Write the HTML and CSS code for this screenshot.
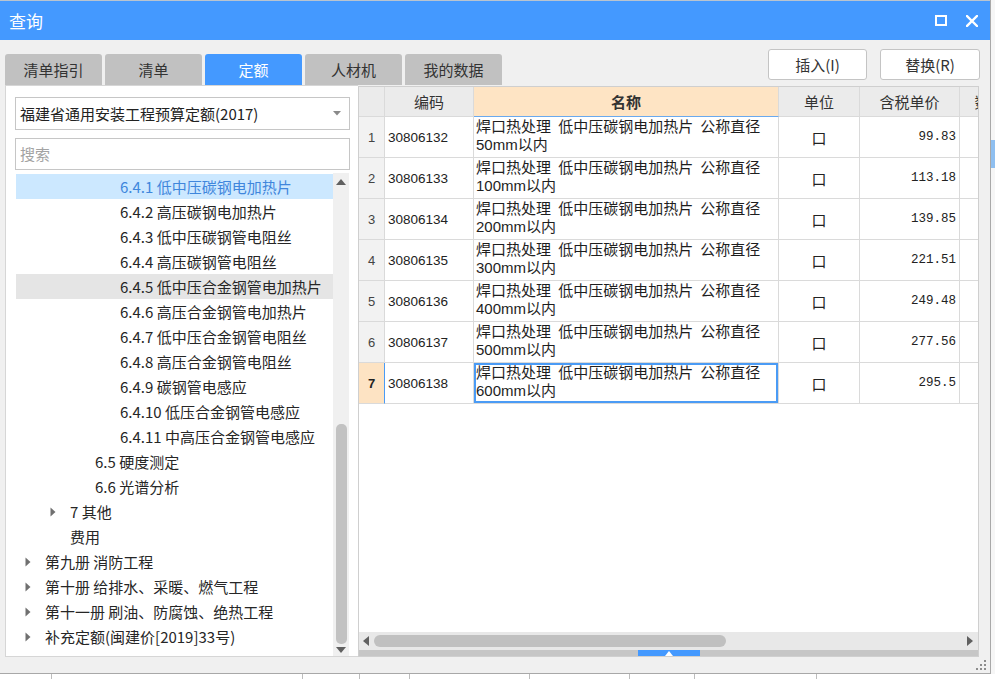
FILE: index.html
```html
<!DOCTYPE html>
<html lang="zh-CN">
<head>
<meta charset="utf-8">
<title>查询</title>
<link rel="stylesheet" href="styles.css">
</head>
<body>
<div class="screen">
  <div class="dialog">
    <div class="titlebar">
      <span class="title">查询</span>
      <div class="win-btns">
        <svg class="win-max" width="12" height="11" viewBox="0 0 12 11"><rect x="1" y="1" width="10" height="9" fill="none" stroke="#fff" stroke-width="2"/></svg>
        <svg class="win-close" width="12" height="12" viewBox="0 0 12 12"><path d="M1 1 L11 11 M11 1 L1 11" stroke="#fff" stroke-width="2.4" stroke-linecap="square"/></svg>
      </div>
    </div>
    <div class="body">
      <div class="toolbar">
        <div class="tabs">
          <div class="tab">清单指引</div>
          <div class="tab">清单</div>
          <div class="tab active">定额</div>
          <div class="tab">人材机</div>
          <div class="tab">我的数据</div>
        </div>
        <div class="actions">
          <button class="btn">插入(I)</button>
          <button class="btn btn-r">替换(R)</button>
        </div>
      </div>
      <div class="panes">
        <div class="left">
          <div class="select">
            <span class="select-text">福建省通用安装工程预算定额(2017)</span>
            <svg width="8" height="5" viewBox="0 0 8 5"><path d="M0 0 L8 0 L4 4.5 Z" fill="#8a8a8a"/></svg>
          </div>
          <div class="search">搜索</div>
          <div class="tree">
            <div class="tree-list">
              <div class="node l3 selected"><span class="tg"></span>6.4.1 低中压碳钢电加热片</div>
              <div class="node l3"><span class="tg"></span>6.4.2 高压碳钢电加热片</div>
              <div class="node l3"><span class="tg"></span>6.4.3 低中压碳钢管电阻丝</div>
              <div class="node l3"><span class="tg"></span>6.4.4 高压碳钢管电阻丝</div>
              <div class="node l3 hover"><span class="tg"></span>6.4.5 低中压合金钢管电加热片</div>
              <div class="node l3"><span class="tg"></span>6.4.6 高压合金钢管电加热片</div>
              <div class="node l3"><span class="tg"></span>6.4.7 低中压合金钢管电阻丝</div>
              <div class="node l3"><span class="tg"></span>6.4.8 高压合金钢管电阻丝</div>
              <div class="node l3"><span class="tg"></span>6.4.9 碳钢管电感应</div>
              <div class="node l3"><span class="tg"></span>6.4.10 低压合金钢管电感应</div>
              <div class="node l3"><span class="tg"></span>6.4.11 中高压合金钢管电感应</div>
              <div class="node l2"><span class="tg"></span>6.5 硬度测定</div>
              <div class="node l2"><span class="tg"></span>6.6 光谱分析</div>
              <div class="node l1"><span class="tg"><svg width="6" height="10" viewBox="0 0 6 10"><path d="M0.5 0.5 L5.5 5 L0.5 9.5 Z" fill="#707070"/></svg></span>7 其他</div>
              <div class="node l1"><span class="tg"></span>费用</div>
              <div class="node l0"><span class="tg"><svg width="6" height="10" viewBox="0 0 6 10"><path d="M0.5 0.5 L5.5 5 L0.5 9.5 Z" fill="#707070"/></svg></span>第九册 消防工程</div>
              <div class="node l0"><span class="tg"><svg width="6" height="10" viewBox="0 0 6 10"><path d="M0.5 0.5 L5.5 5 L0.5 9.5 Z" fill="#707070"/></svg></span>第十册 给排水、采暖、燃气工程</div>
              <div class="node l0"><span class="tg"><svg width="6" height="10" viewBox="0 0 6 10"><path d="M0.5 0.5 L5.5 5 L0.5 9.5 Z" fill="#707070"/></svg></span>第十一册 刷油、防腐蚀、绝热工程</div>
              <div class="node l0"><span class="tg"><svg width="6" height="10" viewBox="0 0 6 10"><path d="M0.5 0.5 L5.5 5 L0.5 9.5 Z" fill="#707070"/></svg></span>补充定额(闽建价[2019]33号)</div>
            </div>
            <div class="vscroll">
              <svg class="arr-up" width="10" height="6" viewBox="0 0 10 6"><path d="M0 6 L10 6 L5 0 Z" fill="#606060"/></svg>
              <div class="vscroll-bottom">
                <div class="vthumb"></div>
                <svg class="arr-down" width="10" height="6" viewBox="0 0 10 6"><path d="M0 0 L10 0 L5 6 Z" fill="#606060"/></svg>
              </div>
            </div>
          </div>
        </div>
        <div class="right">
          <div class="grid-wrap">
            <div class="grid">
              <div class="hc"></div><div class="hc">编码</div><div class="hc name-h">名称</div><div class="hc">单位</div><div class="hc">含税单价</div><div class="hc">数量</div>

              <div class="rn">1</div><div class="code">30806132</div><div class="name">焊口热处理 低中压碳钢电加热片 公称直径<br>50mm以内</div><div class="unit">口</div><div class="price">99.83</div><div class="extra"></div>
              <div class="rn">2</div><div class="code">30806133</div><div class="name">焊口热处理 低中压碳钢电加热片 公称直径<br>100mm以内</div><div class="unit">口</div><div class="price">113.18</div><div class="extra"></div>
              <div class="rn">3</div><div class="code">30806134</div><div class="name">焊口热处理 低中压碳钢电加热片 公称直径<br>200mm以内</div><div class="unit">口</div><div class="price">139.85</div><div class="extra"></div>
              <div class="rn">4</div><div class="code">30806135</div><div class="name">焊口热处理 低中压碳钢电加热片 公称直径<br>300mm以内</div><div class="unit">口</div><div class="price">221.51</div><div class="extra"></div>
              <div class="rn">5</div><div class="code">30806136</div><div class="name">焊口热处理 低中压碳钢电加热片 公称直径<br>400mm以内</div><div class="unit">口</div><div class="price">249.48</div><div class="extra"></div>
              <div class="rn">6</div><div class="code">30806137</div><div class="name">焊口热处理 低中压碳钢电加热片 公称直径<br>500mm以内</div><div class="unit">口</div><div class="price">277.56</div><div class="extra"></div>
              <div class="rn rn-cur">7</div><div class="code">30806138</div><div class="name name-cur">焊口热处理 低中压碳钢电加热片 公称直径<br>600mm以内</div><div class="unit">口</div><div class="price">295.5</div><div class="extra"></div>
            </div>
          </div>
          <div class="hscroll">
            <svg class="arr-l" width="6" height="10" viewBox="0 0 6 10"><path d="M6 0 L6 10 L0 5 Z" fill="#606060"/></svg>
            <div class="hthumb"></div>
            <svg class="arr-r" width="6" height="10" viewBox="0 0 6 10"><path d="M0 0 L0 10 L6 5 Z" fill="#606060"/></svg>
          </div>
          <div class="splitter">
            <div class="splitter-handle"><svg width="8" height="5" viewBox="0 0 8 5"><path d="M0 5 L8 5 L4 0 Z" fill="#fff"/></svg></div>
          </div>
        </div>
      </div>
      <div class="status">
        <svg class="grip" width="11" height="11" viewBox="0 0 11 11" fill="#8c8c8c"><rect x="8" y="0" width="2" height="2"/><rect x="4" y="4" width="2" height="2"/><rect x="8" y="4" width="2" height="2"/><rect x="0" y="8" width="2" height="2"/><rect x="4" y="8" width="2" height="2"/><rect x="8" y="8" width="2" height="2"/></svg>
      </div>
    </div>
  </div>
  <div class="side">
    <div class="side-a"></div>
    <div class="side-b"></div>
    <div class="side-c"></div>
  </div>
</div>
<div class="below">
  <span class="bc w52"></span><span class="bc w251"></span><span class="bc w57"></span><span class="bc w50"></span><span class="bc w120"></span><span class="bc w100"></span><span class="bc w65"></span><span class="bc w122"></span>
</div>
</body>
</html>
```
FILE: styles.css
```css
* { box-sizing: border-box; }
html, body { margin: 0; padding: 0; }
body {
  width: 995px;
  height: 679px;
  overflow: hidden;
  background: #ffffff;
  font-family: "Noto Sans CJK SC", "Microsoft YaHei", sans-serif;
  color: #222;
}
.screen { display: flex; height: 674px; }
.dialog {
  width: 991px;
  height: 674px;
  flex: none;
  display: flex;
  flex-direction: column;
  border-right: 1px solid #a8a8a8;
  border-bottom: 1px solid #a8a8a8;
  background: #f0f0f0;
}
.titlebar {
  height: 40px;
  flex: none;
  background: #4499ff;
  border-top: 1px solid #b9c4d0;
  display: flex;
  align-items: center;
  padding: 0 12px 0 9px;
  color: #fff;
}
.title { font-size: 17px; line-height: 20px; }
.win-btns { margin-left: auto; display: flex; align-items: center; gap: 19px; }

.body { flex: 1; display: flex; flex-direction: column; min-height: 0; }
.toolbar {
  height: 45px;
  flex: none;
  display: flex;
  padding: 0 10px 0 5px;
}
.tabs { display: flex; gap: 3px; align-self: flex-end; }
.tab {
  width: 97px;
  height: 31px;
  background: #c1c1c1;
  border-radius: 3px 3px 0 0;
  font-size: 15px;
  line-height: 31px;
  text-align: center;
  color: #333;
}
.tab.active { background: #4499ff; color: #fff; }
.actions { margin-left: auto; margin-top: 9px; display: flex; gap: 13px; align-self: flex-start; }
.btn {
  width: 99px;
  height: 31px;
  background: #fff;
  border: 1px solid #c4c4c4;
  border-radius: 3px;
  font-family: "Noto Sans CJK SC", sans-serif;
  font-size: 15px;
  color: #333;
  padding: 0;
}
.btn-r { width: 100px; }

.panes { height: 572px; flex: none; display: flex; padding-left: 5px; padding-right: 11px; }
.left {
  width: 353px;
  flex: none;
  background: #fff;
  border: 1px solid #d6d6d6;
  border-right: none;
  padding: 11px 8px 0 9px;
  display: flex;
  flex-direction: column;
}
.select {
  height: 33px;
  flex: none;
  border: 1px solid #c6c6c6;
  display: flex;
  align-items: center;
  padding: 0 8px 0 4px;
  font-size: 15px;
  color: #222;
}
.select-text { flex: 1; line-height: 20px; }
.search {
  margin-top: 8px;
  height: 32px;
  flex: none;
  border: 1px solid #c6c6c6;
  padding-left: 4px;
  font-size: 15px;
  line-height: 30px;
  color: #a3a3a3;
}
.tree { margin: 3px 1px 0 1px; flex: 1; display: flex; overflow: hidden; min-height: 0; }
.tree-list { flex: 1; padding-top: 1px; overflow: hidden; }
.node {
  height: 25px;
  line-height: 25px;
  font-size: 15px;
  white-space: nowrap;
  display: flex;
  align-items: center;
  color: #262626;
}
.node.l0 { padding-left: 9px; }
.node.l1 { padding-left: 34px; }
.node.l2 { padding-left: 59px; }
.node.l3 { padding-left: 84px; }
.tg { width: 20px; flex: none; display: flex; align-items: center; }
.node.selected { background: #cce8ff; color: #3f86dc; }
.node.hover { background: #e5e5e5; }
.vscroll {
  width: 16px;
  flex: none;
  background: #f0f0f0;
  display: flex;
  flex-direction: column;
  align-items: center;
  justify-content: space-between;
  padding: 6px 0 3px;
}
.vscroll-bottom { display: flex; flex-direction: column; align-items: center; gap: 3px; }
.vthumb { width: 11px; height: 220px; background: #c2c2c2; border-radius: 5px; }

.right {
  flex: 1;
  min-width: 0;
  background: #fff;
  border: 1px solid #cfcfcf;
  display: flex;
  flex-direction: column;
  margin-top: 1px;
}
.grid-wrap { flex: 1; overflow: hidden; }
.grid {
  display: grid;
  grid-template-columns: 26px 89px 305px 81px 100px 60px;
  grid-template-rows: 30px repeat(7, 41px);
  width: 661px;
}
.grid > div { border-right: 1px solid #dadada; border-bottom: 1px solid #dadada; }
.hc {
  background: #ebebeb;
  font-size: 15px;
  line-height: 29px;
  text-align: center;
  color: #333;
  white-space: nowrap;
  overflow: hidden;
}
.name-h { background: #fee4c4; font-weight: bold; border-bottom: 1px solid #6aa9ee !important; }
.rn {
  background: #f2f2f2;
  font-family: "Liberation Sans", sans-serif;
  font-size: 13px;
  color: #444;
  display: flex;
  align-items: center;
  justify-content: center;
}
.rn-cur { background: #fde3c3; font-weight: bold; color: #222; border-right: 1px solid #4a9bf5 !important; }
.code {
  font-family: "Liberation Sans", sans-serif;
  font-size: 13.5px;
  color: #222;
  display: flex;
  align-items: center;
  padding-left: 3px;
}
.name {
  font-family: "Liberation Sans", "Noto Sans CJK SC", sans-serif;
  font-size: 15px;
  line-height: 17.5px;
  padding: 1px 2px 0 2px;
  word-spacing: 3px;
  white-space: nowrap;
  overflow: hidden;
  color: #1e1e1e;
}
.name-cur { box-shadow: inset 0 0 0 2px #4a9bf5; }
.unit { font-size: 15px; display: flex; align-items: center; justify-content: center; color: #222; }
.price {
  font-family: "Liberation Mono", monospace;
  font-size: 12.5px;
  color: #222;
  display: flex;
  align-items: center;
  justify-content: flex-end;
  padding-right: 3px;
}

.hscroll {
  height: 18px;
  flex: none;
  background: #e8e8e8;
  display: flex;
  align-items: center;
  padding: 0 5px 0 4px;
}
.hthumb { width: 352px; height: 12px; background: #c0c0c0; border-radius: 6px; margin-left: 5px; }
.arr-r { margin-left: auto; }
.splitter {
  height: 6px;
  flex: none;
  background: #c6c6c6;
  display: flex;
  justify-content: center;
}
.splitter-handle {
  width: 62px;
  height: 6px;
  background: #4499ff;
  display: flex;
  align-items: center;
  justify-content: center;
}
.status { flex: 1; display: flex; justify-content: flex-end; align-items: flex-end; padding: 0 3px 2px 0; }

.side { flex: 1; background: #f6f6f6; display: flex; flex-direction: column; }
.side-a { height: 140px; }
.side-b { height: 28px; background: #8fbff0; }
.side-c { flex: 1; }

.below { height: 5px; display: flex; background: #fff; }
.bc { height: 5px; border-right: 1px solid #bdbdbd; }
.w52 { width: 52px; }
.w251 { width: 251px; }
.w57 { width: 57px; }
.w50 { width: 50px; }
.w120 { width: 120px; }
.w100 { width: 100px; }
.w65 { width: 65px; }
.w122 { width: 122px; }
```
